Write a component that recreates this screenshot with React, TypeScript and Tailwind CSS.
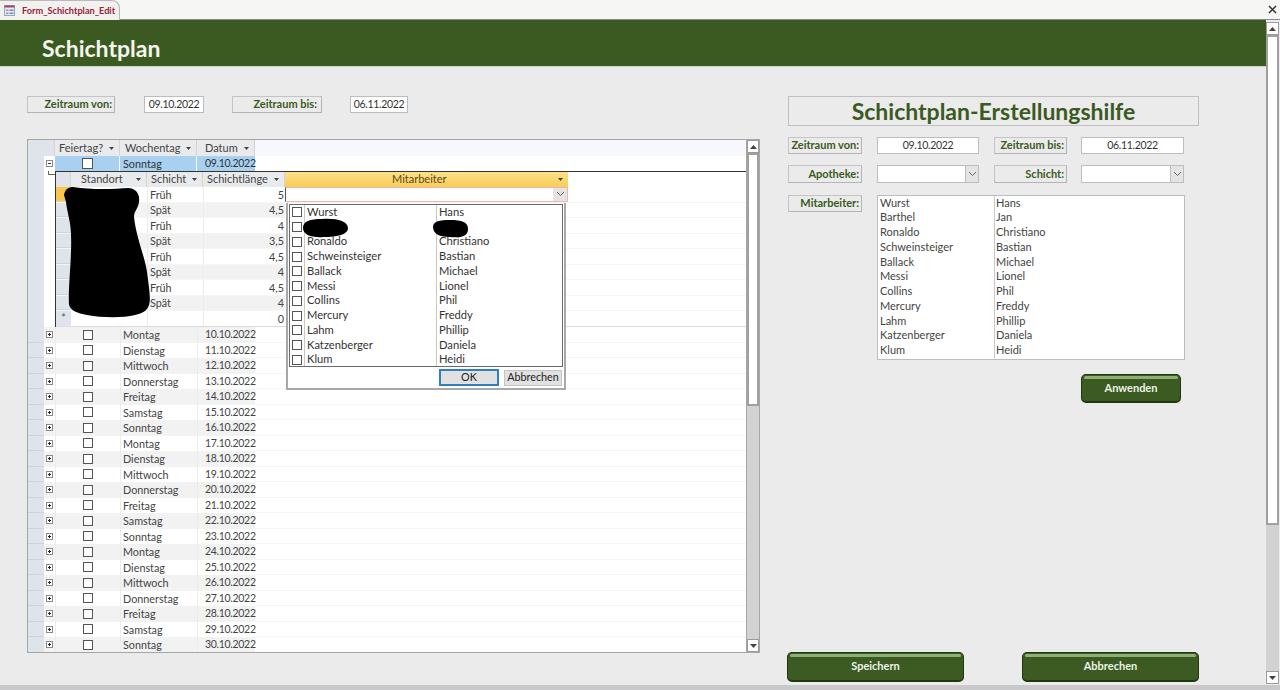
import React from "react";

const days = ["Montag", "Dienstag", "Mittwoch", "Donnerstag", "Freitag", "Samstag", "Sonntag"];
const masterRows = Array.from({ length: 21 }, (_, i) => ({ day: days[i % 7], date: `${10 + i}.10.2022` }));
const subRows = [
  ["Früh", "5"],
  ["Spät", "4,5"],
  ["Früh", "4"],
  ["Spät", "3,5"],
  ["Früh", "4,5"],
  ["Spät", "4"],
  ["Früh", "4,5"],
  ["Spät", "4"],
];
const people = [
  ["Wurst", "Hans"],
  ["Barthel", "Jan"],
  ["Ronaldo", "Christiano"],
  ["Schweinsteiger", "Bastian"],
  ["Ballack", "Michael"],
  ["Messi", "Lionel"],
  ["Collins", "Phil"],
  ["Mercury", "Freddy"],
  ["Lahm", "Phillip"],
  ["Katzenberger", "Daniela"],
  ["Klum", "Heidi"],
];

function Arrow({ up = false }: { up?: boolean }) {
  return (
    <svg width="7" height="4" viewBox="0 0 7 4" className="shrink-0">
      <path d={up ? "M3.5 0 L7 4 L0 4 Z" : "M0 0 L7 0 L3.5 4 Z"} fill="#444" />
    </svg>
  );
}

function SortMark() {
  return (
    <svg width="5" height="3" viewBox="0 0 5 3" className="shrink-0">
      <path d="M0 0 L5 0 L2.5 3 Z" fill="#444" />
    </svg>
  );
}

function Chevron() {
  return (
    <svg width="9" height="6" viewBox="0 0 9 6">
      <path d="M1 1 L4.5 4.5 L8 1" fill="none" stroke="#666" strokeWidth="1" />
    </svg>
  );
}

function Scrollbar({ thumb, outer = false }: { thumb: string; outer?: boolean }) {
  return (
    <div className={`flex flex-col shrink-0 bg-[#d2d2d2] ${outer ? "w-[13px]" : "w-[13px] border-l border-[#a6a6a6]"}`}>
      <div className="h-[13px] shrink-0 bg-white border border-[#9a9a9a] flex items-center justify-center">
        <Arrow up />
      </div>
      <div className={`${thumb} shrink-0 bg-white border-2 border-[#a0a0a0]`} />
      <div className="flex-1" />
      <div className="h-[13px] shrink-0 bg-white border border-[#9a9a9a] flex items-center justify-center">
        <Arrow />
      </div>
    </div>
  );
}

function Caption({ text, className = "" }: { text: string; className?: string }) {
  return (
    <div
      className={`h-[17px] flex items-center justify-end pr-[2px] border border-[#c4c4c4] border-r-[#b4b4b4] border-b-[#b4b4b4] text-[11px] font-bold text-[#3a5a22] whitespace-nowrap shrink-0 ${className}`}
    >
      {text}
    </div>
  );
}

function DateBox({ text, className = "" }: { text: string; className?: string }) {
  return (
    <div className={`h-[17px] flex items-center justify-center bg-white border border-[#bdbdbd] text-[10.5px] tracking-[-0.3px] text-[#333] shrink-0 ${className}`}>
      {text}
    </div>
  );
}

function Combo({ className = "" }: { className?: string }) {
  return (
    <div className={`h-[18px] flex justify-end bg-white border border-[#bdbdbd] shrink-0 ${className}`}>
      <div className="w-[13px] bg-[#e4e4e4] border-l border-[#bdbdbd] flex items-center justify-center">
        <Chevron />
      </div>
    </div>
  );
}

function GreenButton({ text, className = "" }: { text: string; className?: string }) {
  return (
    <div className={`flex flex-col bg-[#3b5b22] border-b-2 border-r border-l border-t border-[#22360f] rounded-[5px] shrink-0 ${className}`}>
      <div className="h-[3px] mx-[2px] mt-[1px] rounded-[2px] bg-[#8fae78] shrink-0" />
      <div className="flex-1 flex items-center justify-center pb-[4px] text-[11px] font-bold text-[#eef3e6]">{text}</div>
    </div>
  );
}

function HeadCell({ text, className = "" }: { text: string; className?: string }) {
  return (
    <div className={`h-full flex items-center justify-between pl-[8px] pr-[5px] bg-[#e9eaec] border-r border-[#d4d4d4] text-[11px] text-[#444] shrink-0 whitespace-nowrap ${className}`}>
      <span>{text}</span>
      <SortMark />
    </div>
  );
}

function Check({ size = "w-[11px] h-[11px]" }: { size?: string }) {
  return <div className={`${size} bg-white border border-[#555] shrink-0`} />;
}

function MasterGrid() {
  return (
    <div className="relative mt-[26px] w-[733px] h-[514px] flex border border-[#a6a6a6] bg-white overflow-hidden">
      <div className="w-[718px] flex flex-col overflow-hidden">
        <div className="h-[16px] flex shrink-0 bg-[#f7f8fd]">
          <div className="w-[27px] bg-[#dfe3ea] border-r border-[#d4d4d4] shrink-0" />
          <HeadCell text="Feiertag?" className="w-[65px] !pl-[4px]" />
          <HeadCell text="Wochentag" className="w-[77px] !pl-[5px]" />
          <HeadCell text="Datum" className="w-[58px]" />
        </div>

        <div className="h-[15px] flex shrink-0 bg-white text-[10.8px] text-[#333]">
          <div className="w-[16px] bg-[#dfe3ea] shrink-0" />
          <div className="w-[11px] flex items-center justify-center shrink-0">
            <div className="w-[7px] h-[7px] flex items-center justify-center bg-white border border-[#8a8a8a]">
              <div className="w-[3px] h-px bg-[#333]" />
            </div>
          </div>
          <div className="w-[65px] bg-[#a8d0f0] flex items-center justify-center border-r border-white shrink-0">
            <Check />
          </div>
          <div className="w-[77px] bg-[#a8d0f0] flex items-center pl-[3px] pt-[1px] border-r border-white shrink-0">Sonntag</div>
          <div className="w-[58px] bg-[#a8d0f0] flex items-center pl-[8px] pt-[1px] text-[10.5px] tracking-[-0.3px] shrink-0">09.10.2022</div>
        </div>

        <div className="h-[156px] flex shrink-0">
          <div className="w-[16px] bg-[#dfe3ea] shrink-0" />
          <div className="w-[11px] shrink-0">
            <div className="ml-[4px] w-[7px] h-[4px] border-l border-b border-[#666]" />
          </div>
          <div className="relative flex-1 border-l border-t border-[#333] flex flex-col">
            <div className="h-[15px] flex shrink-0 bg-white">
              <div className="w-[15px] bg-[#dfe3ea] border-r border-[#d4d4d4] shrink-0" />
              <HeadCell text="Standort" className="w-[76px] !pl-[10px]" />
              <HeadCell text="Schicht" className="w-[56px] !pl-[4px]" />
              <HeadCell text="Schichtlänge" className="w-[82px] !pl-[4px]" />
              <div className="w-[283px] h-full flex items-center justify-between pl-[107px] pr-[5px] bg-gradient-to-b from-[#fbe08a] to-[#f9cd52] text-[11px] text-[#5a4a1a] shrink-0">
                <span>Mitarbeiter</span>
                <SortMark />
              </div>
            </div>
            {subRows.map((r, i) => (
              <div key={i} className="h-[15.5px] flex shrink-0 text-[10.8px] text-[#444] border-b border-[#f5f5f5]">
                <div className={`w-[15px] shrink-0 border-b border-[#cfd3da] ${i === 0 ? "bg-[#fbc64e]" : "bg-[#dfe3ea]"}`} />
                <div className={`w-[76px] shrink-0 ${i % 2 ? "bg-[#f2f2f2]" : "bg-white"}`} />
                <div className={`w-[56px] pl-[2px] pt-[1px] flex items-center shrink-0 border-l border-[#ececec] ${i % 2 ? "bg-[#f2f2f2]" : "bg-white"}`}>{r[0]}</div>
                <div className={`w-[82px] pr-[1px] pt-[1px] flex items-center justify-end shrink-0 border-l border-[#ececec] ${i % 2 ? "bg-[#f2f2f2]" : "bg-white"}`}>{r[1]}</div>
                {i === 0 ? (
                  <div className="w-[283px] flex justify-end bg-white border border-[#f0b4b4] border-l-[#555] shrink-0">
                    <div className="w-[14px] bg-[#e4e4e4] flex items-center justify-center">
                      <Chevron />
                    </div>
                  </div>
                ) : (
                  <div className="w-[283px] shrink-0" />
                )}
              </div>
            ))}
            <div className="h-[15.5px] flex shrink-0 text-[10.8px] text-[#444] border-b border-[#dcdcdc]">
              <div className="w-[15px] flex items-center justify-center bg-[#dfe3ea] text-[#555] shrink-0">*</div>
              <div className="w-[76px] shrink-0" />
              <div className="w-[56px] shrink-0 border-l border-[#ececec]" />
              <div className="w-[82px] pr-[1px] pt-[1px] flex items-center justify-end shrink-0 border-l border-[#ececec]">0</div>
            </div>

            <div className="absolute left-[230px] top-[31px] w-[280px] h-[187px] flex flex-col bg-white border-r-2 border-b-2 border-l-2 border-t-0 border-[#a8a8a8] z-10">
              <div className="mx-px mt-[1px] h-[163px] flex flex-col border border-[#6a6a6a] overflow-hidden shrink-0 text-[11.2px] text-[#333]">
                {people.map((p) => (
                  <div key={p[0]} className="h-[14.75px] flex items-center shrink-0">
                    <div className="w-[14px] flex items-center justify-center shrink-0">
                      <Check size="w-[10px] h-[10px]" />
                    </div>
                    <div className="w-[132px] pl-[2px] shrink-0 border-l border-[#c8c8c8] h-full flex items-center">{p[0]}</div>
                    <div className="flex-1 pl-[2px] border-l border-[#c8c8c8] h-full flex items-center">{p[1]}</div>
                  </div>
                ))}
              </div>
              <div className="flex-1 flex items-center justify-end gap-[5px] pr-[2px] text-[10.8px] text-[#222]">
                <div className="w-[60px] h-[17px] flex items-center justify-center bg-[#e1e1e1] border-2 border-[#2f7fc4]">OK</div>
                <div className="w-[58px] h-[16px] flex items-center justify-center bg-[#e1e1e1] border border-[#c4c4c4]">Abbrechen</div>
              </div>
            </div>

            <svg className="absolute left-[7px] top-[15px] z-20" width="90" height="135" viewBox="0 0 90 135">
              <path
                d="M1 8 C2 2 6 0 10 0 C30 3 50 2 66 1 C74 2 77 8 76 15 C75 22 71 24 71 30 C73 50 82 70 84 85 C86 100 88 112 86 118 C84 124 80 126 72 128 C60 131 40 131 24 128 C14 126 8 124 6 118 C5 100 9 70 8 48 C8 35 4 25 3 15 Z"
                fill="#000"
              />
            </svg>
            <svg className="absolute left-[246px] top-[46px] z-20" width="47" height="20" viewBox="0 0 47 20">
              <path d="M1 10 C1 3 8 1 20 1 C34 0 46 3 46 10 C46 17 34 19 22 19 C10 20 1 17 1 10 Z" fill="#000" />
            </svg>
            <svg className="absolute left-[376px] top-[47px] z-20" width="37" height="20" viewBox="0 0 37 20">
              <path d="M1 8 C1 2 8 1 18 1 C30 1 36 3 36 10 C36 18 28 19 18 18 C8 18 1 15 1 8 Z" fill="#000" />
            </svg>
          </div>
        </div>

        {masterRows.map((r, i) => {
          const bg = i % 2 ? "bg-white" : "bg-[#f2f2f2]";
          return (
            <div key={r.date} className="h-[15.5px] flex shrink-0 text-[10.8px] text-[#444] bg-white">
              <div className="w-[16px] bg-[#dfe3ea] border-b border-[#cfd3da] shrink-0" />
              <div className={`w-[11px] flex items-center justify-center shrink-0 ${bg}`}>
                <div className="relative w-[7px] h-[7px] flex items-center justify-center bg-white border border-[#8a8a8a]">
                  <div className="w-[3px] h-px bg-[#222]" />
                  <div className="absolute w-px h-[3px] bg-[#222]" />
                </div>
              </div>
              <div className={`w-[65px] flex items-center justify-center border-l border-[#ececec] shrink-0 ${bg}`}>
                <Check size="w-[10px] h-[10px]" />
              </div>
              <div className={`w-[77px] flex items-center pl-[2px] pt-[1px] border-l border-[#ececec] shrink-0 ${bg}`}>{r.day}</div>
              <div className={`w-[58px] flex items-center pl-[7px] pt-[1px] text-[10.5px] tracking-[-0.3px] border-l border-[#ececec] shrink-0 ${bg}`}>{r.date}</div>
              <div className="flex-1 border-b border-[#f5f5f5]" />
            </div>
          );
        })}
      </div>
      <Scrollbar thumb="h-[253px]" />
    </div>
  );
}

function RightPanel() {
  return (
    <div className="ml-[28px] w-[411px] flex flex-col pt-[29px] pb-[3px]">
      <div className="h-[30px] flex items-center justify-center border border-[#c0c0c0] text-[23px] leading-none font-bold text-[#3a5a22] shrink-0">
        Schichtplan-Erstellungshilfe
      </div>
      <div className="mt-[11px] flex shrink-0">
        <Caption text="Zeitraum von:" className="w-[74px]" />
        <DateBox text="09.10.2022" className="ml-[15px] w-[102px]" />
        <Caption text="Zeitraum bis:" className="ml-[15px] w-[73px]" />
        <DateBox text="06.11.2022" className="ml-[14px] w-[103px]" />
      </div>
      <div className="mt-[11px] flex shrink-0">
        <Caption text="Apotheke:" className="w-[74px] h-[18px]" />
        <Combo className="ml-[15px] w-[102px]" />
        <Caption text="Schicht:" className="ml-[15px] w-[73px] h-[18px]" />
        <Combo className="ml-[14px] w-[103px]" />
      </div>
      <div className="mt-[12px] flex shrink-0">
        <Caption text="Mitarbeiter:" className="w-[74px]" />
        <div className="ml-[15px] w-[308px] h-[165px] flex flex-col bg-white border border-[#bdbdbd] text-[11px] text-[#444]">
          {people.map((p) => (
            <div key={p[0]} className="h-[14.75px] flex items-center shrink-0">
              <div className="w-[117px] pl-[2px] pb-[1px] h-full flex items-center shrink-0 border-r border-[#c8c8c8]">{p[0]}</div>
              <div className="flex-1 pl-[1px] pb-[1px]">{p[1]}</div>
            </div>
          ))}
        </div>
      </div>
      <GreenButton text="Anwenden" className="mt-[14px] ml-[293px] w-[100px] h-[29px]" />
      <div className="mt-auto flex justify-between -ml-px">
        <GreenButton text="Speichern" className="w-[177px] h-[30px]" />
        <GreenButton text="Abbrechen" className="w-[177px] h-[30px]" />
      </div>
    </div>
  );
}

export default function App() {
  return (
    <div className="w-[1280px] h-[690px] flex flex-col overflow-hidden bg-[#ebebeb] font-['Lato','Liberation_Sans',sans-serif]">
      <div className="h-[20px] flex items-stretch justify-between shrink-0 bg-[#f6f6f4] border-b border-[#8a8a8a]">
        <div className="w-[120px] h-[20px] flex items-center gap-[7px] pl-[4px] bg-[#f1f1f0] border-r border-t border-[#b8b8b8] rounded-tr-[8px] shrink-0">
          <svg width="11" height="11" viewBox="0 0 11 11" className="shrink-0">
            <rect x="0.5" y="0.5" width="10" height="10" fill="#e6ecf4" stroke="#9aa7b8" />
            <rect x="0.5" y="0.5" width="10" height="2" fill="#a8436a" />
            <rect x="2" y="4.5" width="2.5" height="1.5" fill="#8a9ab0" />
            <rect x="5.5" y="4.5" width="4" height="1.5" fill="#6d8fb8" />
            <rect x="2" y="7.5" width="2.5" height="1.5" fill="#8a9ab0" />
            <rect x="5.5" y="7.5" width="4" height="1.5" fill="#6d8fb8" />
          </svg>
          <span className="text-[9.2px] font-bold text-[#9b2335] whitespace-nowrap">Form_Schichtplan_Edit</span>
        </div>
        <div className="pr-[3px] pb-[1px] flex items-center text-[#333]">
          <svg width="9" height="9" viewBox="0 0 9 9">
            <path d="M1 1 L8 8 M8 1 L1 8" stroke="#333" strokeWidth="1.5" />
          </svg>
        </div>
      </div>

      <div className="flex-1 flex min-h-0">
        <div className="w-[1266px] flex flex-col shrink-0">
          <div className="h-[47px] flex items-center pl-[42px] pt-[11px] bg-[#3a5a22] border-b border-[#cfd4c8] text-[23px] font-bold text-[#f4f6ee] shrink-0">
            Schichtplan
          </div>
          <div className="flex-1 flex min-h-0">
            <div className="ml-[27px] w-[733px] flex flex-col pt-[29px] shrink-0">
              <div className="flex shrink-0">
                <Caption text="Zeitraum von:" className="w-[88px]" />
                <DateBox text="09.10.2022" className="ml-[29px] w-[60px]" />
                <Caption text="Zeitraum bis:" className="ml-[28px] w-[90px] !pr-[4px]" />
                <DateBox text="06.11.2022" className="ml-[28px] w-[58px]" />
              </div>
              <MasterGrid />
            </div>
            <RightPanel />
          </div>
        </div>
        <div className="flex-1 pt-[2px] pb-[1px] flex">
          <Scrollbar thumb="h-[490px]" outer />
        </div>
      </div>

      <div className="h-[5px] bg-[#c9c9cb] shrink-0" />
    </div>
  );
}
